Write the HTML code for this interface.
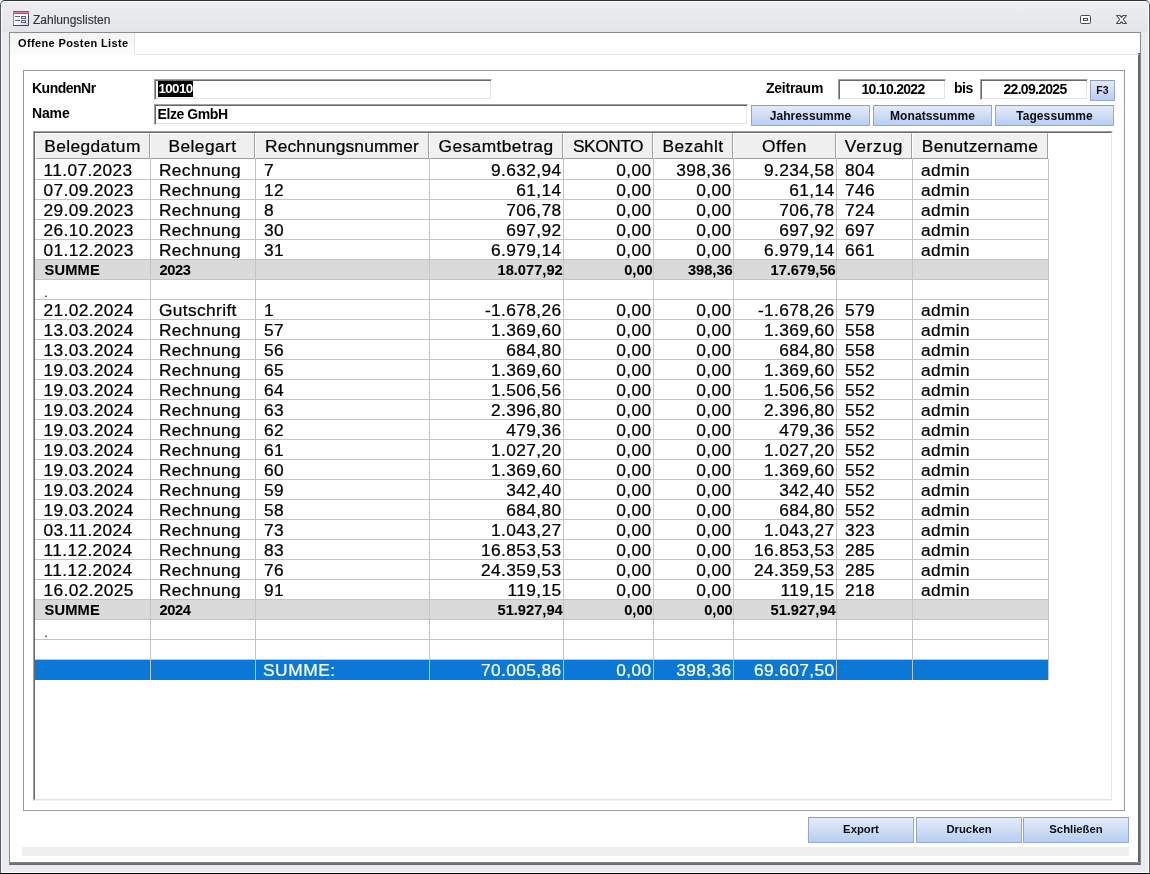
<!DOCTYPE html>
<html lang="de"><head><meta charset="utf-8"><title>Zahlungslisten</title>
<style>
html,body{margin:0;padding:0;}
body{will-change:transform;width:1150px;height:874px;overflow:hidden;background:#fff;position:relative;font-family:"Liberation Sans",sans-serif;color:#000;}
div{box-sizing:border-box;}
.abs{position:absolute;}
/* window */
#win{position:absolute;left:0;top:0;width:1150px;height:874px;border:1px solid #565a60;border-top-color:#2e3034;border-bottom-color:#000;border-radius:5px 5px 0 0;background:#e9ebef;overflow:hidden;}
#win .hl{position:absolute;left:0;top:0;width:1148px;height:872px;border:1px solid #fff;border-radius:4px 4px 0 0;}
#tbar{position:absolute;left:1px;top:1px;width:1146px;height:30px;background:linear-gradient(#edeef1,#e3e4e8);}
#title{position:absolute;left:33px;top:12px;font-size:12px;line-height:16px;color:#2f343e;white-space:nowrap;letter-spacing:0;-webkit-text-stroke:0.15px #2f343e;}
#content{position:absolute;left:9px;top:32px;width:1132px;height:833px;background:#fff;border:1px solid #88898e;border-top-color:#8c8c90;border-bottom-color:#6a6b6e;}
#shr{position:absolute;left:1138px;top:53px;width:2px;height:811px;background:#63666b;}
#shb{position:absolute;left:10px;top:862px;width:1130px;height:2px;background:linear-gradient(#8e8f92,#66676a);}
/* tab */
#tab{position:absolute;left:10px;top:33px;width:125px;height:21px;background:linear-gradient(#f4f4f4,#fbfbfb);border-right:1px solid #e4e4e4;}
#tabline{position:absolute;left:135px;top:54px;width:1004px;height:1px;background:#e2e2e2;}
#tabtxt{position:absolute;left:18px;top:36px;font-size:11px;font-weight:bold;line-height:14px;white-space:nowrap;letter-spacing:0.38px;}
/* group box */
#grp{position:absolute;left:23px;top:70px;width:1102px;height:741px;border:1px solid #9a9a9a;}
.lbl{position:absolute;font-size:14px;font-weight:bold;line-height:16px;white-space:nowrap;}
.inp{position:absolute;height:21px;background:#fff;border:1px solid;border-color:#a0a0a0 #fff #fff #a0a0a0;box-shadow:inset 1px 1px 0 #696969, inset -1px -1px 0 #e4e4e4;}
.inp span{position:absolute;top:1px;font-size:14px;font-weight:bold;line-height:16px;white-space:nowrap;}
.btn{position:absolute;border:1px solid;border-color:#8f9db8 #93a9d6 #93a9d6 #96a6c4;background:linear-gradient(#e2ebfb,#d1def6 45%,#b6cdf4);font-weight:bold;text-align:center;white-space:nowrap;color:#0a0a14;}
/* list */
#lb{position:absolute;left:33px;top:131px;width:1080px;height:670px;border:1px solid;border-color:#a0a0a0 #fff #f4f4f4 #a0a0a0;}
#lb2{position:absolute;left:0;top:0;width:1078px;height:668px;border:1px solid;border-color:#696969 #e6e6e6 #e3e3e3 #696969;}
.list{position:absolute;left:35px;top:133px;width:1076px;height:666px;overflow:hidden;}
.hrow{position:absolute;left:0;top:0;height:26px;width:1013px;}
.hc{position:absolute;top:0;height:26px;background:#f0f0f0;border-left:1px solid #fff;border-top:1px solid #fff;border-right:1px solid #a0a0a0;border-bottom:1px solid #a0a0a0;text-align:center;font-size:17.33px;line-height:25px;white-space:nowrap;overflow:hidden;letter-spacing:0.12px;}
.row{position:absolute;left:0;width:1014px;height:20px;border-bottom:1px solid #c4c4c4;}
.row .c{position:absolute;top:0;height:18px;overflow:hidden;font-size:17.33px;line-height:20px;white-space:nowrap;letter-spacing:0.36px;}
.c.l{padding-left:9px;text-align:left;}
.row .c.l:first-child{padding-left:8.5px;}
.c.r{padding-right:1.6px;text-align:right;}
.row.s{background:#dadada;}
.row.s .c{font-size:14.67px;font-weight:bold;letter-spacing:0;line-height:20px;}
.row.s .c.r{padding-right:0.3px;}
.row.s .c.l{padding-left:9.5px;letter-spacing:0.15px;}
.row.p .c{font-size:11px;line-height:26px;letter-spacing:0;}
.row.p .c.l:first-child{padding-left:9.5px;}
.row.s .c:nth-child(2){letter-spacing:-0.4px;}
.row.t{background:#0a78d7;color:#fff;border-bottom-color:transparent;}
.row.t .c.l{letter-spacing:0.55px;padding-left:8px;}
.vl{position:absolute;top:26px;width:1px;height:521px;background:#c4c4c4;}
.list{-webkit-text-stroke:0.24px currentColor;}
.row.s .c{-webkit-text-stroke:0.08px currentColor;}

</style></head>
<body>
<div id="win"><div class="hl"></div><div id="tbar"></div></div>
<svg class="abs" style="left:13px;top:11px" width="16" height="15" viewBox="0 0 16 15">
<defs><linearGradient id="ig" x1="0" y1="0" x2="1" y2="1"><stop offset="0" stop-color="#ffffff"/><stop offset="0.55" stop-color="#f4f4fc"/><stop offset="1" stop-color="#cfd1ee"/></linearGradient></defs>
<rect x="0" y="0" width="16" height="15" fill="#8d92a8"/>
<rect x="1" y="3" width="14" height="11" fill="url(#ig)"/>
<rect x="0" y="0" width="16" height="1" fill="#b9406a"/>
<rect x="0" y="1" width="16" height="1" fill="#de7d98"/>
<rect x="0" y="2" width="16" height="1" fill="#c24a70"/>
<rect x="0" y="14" width="16" height="1" fill="#3f4458"/>
<rect x="15" y="3" width="1" height="12" fill="#474c63"/>
<rect x="2" y="5" width="5" height="1" fill="#5d6380"/>
<rect x="2" y="9" width="5" height="1" fill="#5d6380"/>
<rect x="8.5" y="5.5" width="4" height="2" fill="#dfe2f4" stroke="#5d6380"/>
<rect x="8.5" y="9.5" width="4" height="2" fill="#dfe2f4" stroke="#5d6380"/>
</svg>
<div id="title">Zahlungslisten</div>
<svg class="abs" style="left:1080px;top:15px" width="11" height="9" viewBox="0 0 11 9">
<rect x="0.5" y="0.5" width="10" height="8" rx="1.2" fill="#fff" stroke="#474c56"/>
<rect x="3.5" y="3.5" width="4" height="2" fill="#fff" stroke="#474c56"/>
</svg>
<svg class="abs" style="left:1115px;top:14px" width="13" height="11" viewBox="-1 -1 13 11">
<path d="M0.6 0.5 L3.9 0.5 L5.5 2.3 L7.1 0.5 L10.4 0.5 L7.3 4.5 L10.4 8.5 L7.1 8.5 L5.5 6.7 L3.9 8.5 L0.6 8.5 L3.7 4.5 Z" fill="#fff" stroke="#484c56" stroke-width="1.15" stroke-linejoin="round"/>
</svg>
<div id="content"></div><div id="shr"></div><div id="shb"></div>
<div id="tab"></div><div id="tabline"></div>
<div id="tabtxt">Offene Posten Liste</div>
<div id="grp"></div>
<div class="lbl" style="left:32px;top:80px;letter-spacing:-0.5px">KundenNr</div>
<div class="lbl" style="left:32px;top:105px;letter-spacing:-0.15px">Name</div>
<div class="inp" style="left:154px;top:79px;width:338px"><span style="left:3px;top:1px;height:16px;background:#000;color:#fff;font-size:13.33px;letter-spacing:-0.6px;padding-left:0.5px">10010</span></div>
<div class="inp" style="left:154px;top:104px;width:594px"><span style="left:2.5px;letter-spacing:-0.42px">Elze GmbH</span></div>
<div class="lbl" style="left:766px;top:80px;letter-spacing:-0.25px">Zeitraum</div>
<div class="inp" style="left:838px;top:79px;width:108px"><span style="left:1px;width:106px;text-align:center;letter-spacing:-0.7px">10.10.2022</span></div>
<div class="lbl" style="left:954px;top:80px;letter-spacing:-0.45px">bis</div>
<div class="inp" style="left:980px;top:79px;width:108px"><span style="left:1px;width:106px;text-align:center;letter-spacing:-0.7px">22.09.2025</span></div>
<div class="btn" style="left:1090px;top:80px;width:25px;height:21px;font-size:10.5px;line-height:19px">F3</div>
<div class="btn" style="left:751px;top:105px;width:119px;height:21px;font-size:12px;line-height:20px;letter-spacing:0.08px">Jahressumme</div>
<div class="btn" style="left:873px;top:105px;width:119px;height:21px;font-size:12px;line-height:20px;letter-spacing:0.08px">Monatssumme</div>
<div class="btn" style="left:995px;top:105px;width:119px;height:21px;font-size:12px;line-height:20px;letter-spacing:0.08px">Tagessumme</div>
<div id="lb"><div id="lb2"></div></div>
<div class="list">
<div class="hrow"><div class="hc" style="left:0px;width:115px;letter-spacing:0.4px">Belegdatum</div><div class="hc" style="left:115px;width:105px;letter-spacing:0.41px">Belegart</div><div class="hc" style="left:220px;width:174px;letter-spacing:0.19px">Rechnungsnummer</div><div class="hc" style="left:394px;width:134px;letter-spacing:0.43px">Gesamtbetrag</div><div class="hc" style="left:528px;width:90px;letter-spacing:-0.48px">SKONTO</div><div class="hc" style="left:618px;width:80px;letter-spacing:0.45px">Bezahlt</div><div class="hc" style="left:698px;width:103px;letter-spacing:0.62px">Offen</div><div class="hc" style="left:801px;width:76px;letter-spacing:0.72px">Verzug</div><div class="hc" style="left:877px;width:136px;letter-spacing:0.3px">Benutzername</div></div>
<div class="row d" style="top:27px"><div class="c l" style="left:0px;width:115px">11.07.2023</div><div class="c l" style="left:115px;width:105px">Rechnung</div><div class="c l" style="left:220px;width:174px">7</div><div class="c r" style="left:394px;width:134px">9.632,94</div><div class="c r" style="left:528px;width:90px">0,00</div><div class="c r" style="left:618px;width:80px">398,36</div><div class="c r" style="left:698px;width:103px">9.234,58</div><div class="c l" style="left:801px;width:76px">804</div><div class="c l" style="left:877px;width:136px">admin</div></div>
<div class="row d" style="top:47px"><div class="c l" style="left:0px;width:115px">07.09.2023</div><div class="c l" style="left:115px;width:105px">Rechnung</div><div class="c l" style="left:220px;width:174px">12</div><div class="c r" style="left:394px;width:134px">61,14</div><div class="c r" style="left:528px;width:90px">0,00</div><div class="c r" style="left:618px;width:80px">0,00</div><div class="c r" style="left:698px;width:103px">61,14</div><div class="c l" style="left:801px;width:76px">746</div><div class="c l" style="left:877px;width:136px">admin</div></div>
<div class="row d" style="top:67px"><div class="c l" style="left:0px;width:115px">29.09.2023</div><div class="c l" style="left:115px;width:105px">Rechnung</div><div class="c l" style="left:220px;width:174px">8</div><div class="c r" style="left:394px;width:134px">706,78</div><div class="c r" style="left:528px;width:90px">0,00</div><div class="c r" style="left:618px;width:80px">0,00</div><div class="c r" style="left:698px;width:103px">706,78</div><div class="c l" style="left:801px;width:76px">724</div><div class="c l" style="left:877px;width:136px">admin</div></div>
<div class="row d" style="top:87px"><div class="c l" style="left:0px;width:115px">26.10.2023</div><div class="c l" style="left:115px;width:105px">Rechnung</div><div class="c l" style="left:220px;width:174px">30</div><div class="c r" style="left:394px;width:134px">697,92</div><div class="c r" style="left:528px;width:90px">0,00</div><div class="c r" style="left:618px;width:80px">0,00</div><div class="c r" style="left:698px;width:103px">697,92</div><div class="c l" style="left:801px;width:76px">697</div><div class="c l" style="left:877px;width:136px">admin</div></div>
<div class="row d" style="top:107px"><div class="c l" style="left:0px;width:115px">01.12.2023</div><div class="c l" style="left:115px;width:105px">Rechnung</div><div class="c l" style="left:220px;width:174px">31</div><div class="c r" style="left:394px;width:134px">6.979,14</div><div class="c r" style="left:528px;width:90px">0,00</div><div class="c r" style="left:618px;width:80px">0,00</div><div class="c r" style="left:698px;width:103px">6.979,14</div><div class="c l" style="left:801px;width:76px">661</div><div class="c l" style="left:877px;width:136px">admin</div></div>
<div class="row s" style="top:127px"><div class="c l" style="left:0px;width:115px">SUMME</div><div class="c l" style="left:115px;width:105px">2023</div><div class="c l" style="left:220px;width:174px"></div><div class="c r" style="left:394px;width:134px">18.077,92</div><div class="c r" style="left:528px;width:90px">0,00</div><div class="c r" style="left:618px;width:80px">398,36</div><div class="c r" style="left:698px;width:103px">17.679,56</div><div class="c l" style="left:801px;width:76px"></div><div class="c l" style="left:877px;width:136px"></div></div>
<div class="row p" style="top:147px"><div class="c l" style="left:0px;width:115px">.</div><div class="c l" style="left:115px;width:105px"></div><div class="c l" style="left:220px;width:174px"></div><div class="c r" style="left:394px;width:134px"></div><div class="c r" style="left:528px;width:90px"></div><div class="c r" style="left:618px;width:80px"></div><div class="c r" style="left:698px;width:103px"></div><div class="c l" style="left:801px;width:76px"></div><div class="c l" style="left:877px;width:136px"></div></div>
<div class="row d" style="top:167px"><div class="c l" style="left:0px;width:115px">21.02.2024</div><div class="c l" style="left:115px;width:105px">Gutschrift</div><div class="c l" style="left:220px;width:174px">1</div><div class="c r" style="left:394px;width:134px">-1.678,26</div><div class="c r" style="left:528px;width:90px">0,00</div><div class="c r" style="left:618px;width:80px">0,00</div><div class="c r" style="left:698px;width:103px">-1.678,26</div><div class="c l" style="left:801px;width:76px">579</div><div class="c l" style="left:877px;width:136px">admin</div></div>
<div class="row d" style="top:187px"><div class="c l" style="left:0px;width:115px">13.03.2024</div><div class="c l" style="left:115px;width:105px">Rechnung</div><div class="c l" style="left:220px;width:174px">57</div><div class="c r" style="left:394px;width:134px">1.369,60</div><div class="c r" style="left:528px;width:90px">0,00</div><div class="c r" style="left:618px;width:80px">0,00</div><div class="c r" style="left:698px;width:103px">1.369,60</div><div class="c l" style="left:801px;width:76px">558</div><div class="c l" style="left:877px;width:136px">admin</div></div>
<div class="row d" style="top:207px"><div class="c l" style="left:0px;width:115px">13.03.2024</div><div class="c l" style="left:115px;width:105px">Rechnung</div><div class="c l" style="left:220px;width:174px">56</div><div class="c r" style="left:394px;width:134px">684,80</div><div class="c r" style="left:528px;width:90px">0,00</div><div class="c r" style="left:618px;width:80px">0,00</div><div class="c r" style="left:698px;width:103px">684,80</div><div class="c l" style="left:801px;width:76px">558</div><div class="c l" style="left:877px;width:136px">admin</div></div>
<div class="row d" style="top:227px"><div class="c l" style="left:0px;width:115px">19.03.2024</div><div class="c l" style="left:115px;width:105px">Rechnung</div><div class="c l" style="left:220px;width:174px">65</div><div class="c r" style="left:394px;width:134px">1.369,60</div><div class="c r" style="left:528px;width:90px">0,00</div><div class="c r" style="left:618px;width:80px">0,00</div><div class="c r" style="left:698px;width:103px">1.369,60</div><div class="c l" style="left:801px;width:76px">552</div><div class="c l" style="left:877px;width:136px">admin</div></div>
<div class="row d" style="top:247px"><div class="c l" style="left:0px;width:115px">19.03.2024</div><div class="c l" style="left:115px;width:105px">Rechnung</div><div class="c l" style="left:220px;width:174px">64</div><div class="c r" style="left:394px;width:134px">1.506,56</div><div class="c r" style="left:528px;width:90px">0,00</div><div class="c r" style="left:618px;width:80px">0,00</div><div class="c r" style="left:698px;width:103px">1.506,56</div><div class="c l" style="left:801px;width:76px">552</div><div class="c l" style="left:877px;width:136px">admin</div></div>
<div class="row d" style="top:267px"><div class="c l" style="left:0px;width:115px">19.03.2024</div><div class="c l" style="left:115px;width:105px">Rechnung</div><div class="c l" style="left:220px;width:174px">63</div><div class="c r" style="left:394px;width:134px">2.396,80</div><div class="c r" style="left:528px;width:90px">0,00</div><div class="c r" style="left:618px;width:80px">0,00</div><div class="c r" style="left:698px;width:103px">2.396,80</div><div class="c l" style="left:801px;width:76px">552</div><div class="c l" style="left:877px;width:136px">admin</div></div>
<div class="row d" style="top:287px"><div class="c l" style="left:0px;width:115px">19.03.2024</div><div class="c l" style="left:115px;width:105px">Rechnung</div><div class="c l" style="left:220px;width:174px">62</div><div class="c r" style="left:394px;width:134px">479,36</div><div class="c r" style="left:528px;width:90px">0,00</div><div class="c r" style="left:618px;width:80px">0,00</div><div class="c r" style="left:698px;width:103px">479,36</div><div class="c l" style="left:801px;width:76px">552</div><div class="c l" style="left:877px;width:136px">admin</div></div>
<div class="row d" style="top:307px"><div class="c l" style="left:0px;width:115px">19.03.2024</div><div class="c l" style="left:115px;width:105px">Rechnung</div><div class="c l" style="left:220px;width:174px">61</div><div class="c r" style="left:394px;width:134px">1.027,20</div><div class="c r" style="left:528px;width:90px">0,00</div><div class="c r" style="left:618px;width:80px">0,00</div><div class="c r" style="left:698px;width:103px">1.027,20</div><div class="c l" style="left:801px;width:76px">552</div><div class="c l" style="left:877px;width:136px">admin</div></div>
<div class="row d" style="top:327px"><div class="c l" style="left:0px;width:115px">19.03.2024</div><div class="c l" style="left:115px;width:105px">Rechnung</div><div class="c l" style="left:220px;width:174px">60</div><div class="c r" style="left:394px;width:134px">1.369,60</div><div class="c r" style="left:528px;width:90px">0,00</div><div class="c r" style="left:618px;width:80px">0,00</div><div class="c r" style="left:698px;width:103px">1.369,60</div><div class="c l" style="left:801px;width:76px">552</div><div class="c l" style="left:877px;width:136px">admin</div></div>
<div class="row d" style="top:347px"><div class="c l" style="left:0px;width:115px">19.03.2024</div><div class="c l" style="left:115px;width:105px">Rechnung</div><div class="c l" style="left:220px;width:174px">59</div><div class="c r" style="left:394px;width:134px">342,40</div><div class="c r" style="left:528px;width:90px">0,00</div><div class="c r" style="left:618px;width:80px">0,00</div><div class="c r" style="left:698px;width:103px">342,40</div><div class="c l" style="left:801px;width:76px">552</div><div class="c l" style="left:877px;width:136px">admin</div></div>
<div class="row d" style="top:367px"><div class="c l" style="left:0px;width:115px">19.03.2024</div><div class="c l" style="left:115px;width:105px">Rechnung</div><div class="c l" style="left:220px;width:174px">58</div><div class="c r" style="left:394px;width:134px">684,80</div><div class="c r" style="left:528px;width:90px">0,00</div><div class="c r" style="left:618px;width:80px">0,00</div><div class="c r" style="left:698px;width:103px">684,80</div><div class="c l" style="left:801px;width:76px">552</div><div class="c l" style="left:877px;width:136px">admin</div></div>
<div class="row d" style="top:387px"><div class="c l" style="left:0px;width:115px">03.11.2024</div><div class="c l" style="left:115px;width:105px">Rechnung</div><div class="c l" style="left:220px;width:174px">73</div><div class="c r" style="left:394px;width:134px">1.043,27</div><div class="c r" style="left:528px;width:90px">0,00</div><div class="c r" style="left:618px;width:80px">0,00</div><div class="c r" style="left:698px;width:103px">1.043,27</div><div class="c l" style="left:801px;width:76px">323</div><div class="c l" style="left:877px;width:136px">admin</div></div>
<div class="row d" style="top:407px"><div class="c l" style="left:0px;width:115px">11.12.2024</div><div class="c l" style="left:115px;width:105px">Rechnung</div><div class="c l" style="left:220px;width:174px">83</div><div class="c r" style="left:394px;width:134px">16.853,53</div><div class="c r" style="left:528px;width:90px">0,00</div><div class="c r" style="left:618px;width:80px">0,00</div><div class="c r" style="left:698px;width:103px">16.853,53</div><div class="c l" style="left:801px;width:76px">285</div><div class="c l" style="left:877px;width:136px">admin</div></div>
<div class="row d" style="top:427px"><div class="c l" style="left:0px;width:115px">11.12.2024</div><div class="c l" style="left:115px;width:105px">Rechnung</div><div class="c l" style="left:220px;width:174px">76</div><div class="c r" style="left:394px;width:134px">24.359,53</div><div class="c r" style="left:528px;width:90px">0,00</div><div class="c r" style="left:618px;width:80px">0,00</div><div class="c r" style="left:698px;width:103px">24.359,53</div><div class="c l" style="left:801px;width:76px">285</div><div class="c l" style="left:877px;width:136px">admin</div></div>
<div class="row d" style="top:447px"><div class="c l" style="left:0px;width:115px">16.02.2025</div><div class="c l" style="left:115px;width:105px">Rechnung</div><div class="c l" style="left:220px;width:174px">91</div><div class="c r" style="left:394px;width:134px">119,15</div><div class="c r" style="left:528px;width:90px">0,00</div><div class="c r" style="left:618px;width:80px">0,00</div><div class="c r" style="left:698px;width:103px">119,15</div><div class="c l" style="left:801px;width:76px">218</div><div class="c l" style="left:877px;width:136px">admin</div></div>
<div class="row s" style="top:467px"><div class="c l" style="left:0px;width:115px">SUMME</div><div class="c l" style="left:115px;width:105px">2024</div><div class="c l" style="left:220px;width:174px"></div><div class="c r" style="left:394px;width:134px">51.927,94</div><div class="c r" style="left:528px;width:90px">0,00</div><div class="c r" style="left:618px;width:80px">0,00</div><div class="c r" style="left:698px;width:103px">51.927,94</div><div class="c l" style="left:801px;width:76px"></div><div class="c l" style="left:877px;width:136px"></div></div>
<div class="row p" style="top:487px"><div class="c l" style="left:0px;width:115px">.</div><div class="c l" style="left:115px;width:105px"></div><div class="c l" style="left:220px;width:174px"></div><div class="c r" style="left:394px;width:134px"></div><div class="c r" style="left:528px;width:90px"></div><div class="c r" style="left:618px;width:80px"></div><div class="c r" style="left:698px;width:103px"></div><div class="c l" style="left:801px;width:76px"></div><div class="c l" style="left:877px;width:136px"></div></div>
<div class="row d" style="top:507px"><div class="c l" style="left:0px;width:115px"></div><div class="c l" style="left:115px;width:105px"></div><div class="c l" style="left:220px;width:174px"></div><div class="c r" style="left:394px;width:134px"></div><div class="c r" style="left:528px;width:90px"></div><div class="c r" style="left:618px;width:80px"></div><div class="c r" style="left:698px;width:103px"></div><div class="c l" style="left:801px;width:76px"></div><div class="c l" style="left:877px;width:136px"></div></div>
<div class="row t" style="top:527px"><div class="c l" style="left:0px;width:115px"></div><div class="c l" style="left:115px;width:105px"></div><div class="c l" style="left:220px;width:174px">SUMME:</div><div class="c r" style="left:394px;width:134px">70.005,86</div><div class="c r" style="left:528px;width:90px">0,00</div><div class="c r" style="left:618px;width:80px">398,36</div><div class="c r" style="left:698px;width:103px">69.607,50</div><div class="c l" style="left:801px;width:76px"></div><div class="c l" style="left:877px;width:136px"></div></div>
<div class="vl" style="left:115px"></div><div class="vl" style="left:220px"></div><div class="vl" style="left:394px"></div><div class="vl" style="left:528px"></div><div class="vl" style="left:618px"></div><div class="vl" style="left:698px"></div><div class="vl" style="left:801px"></div><div class="vl" style="left:877px"></div><div class="vl" style="left:1013px"></div>
</div>
<div class="btn" style="left:808px;top:817px;width:106px;height:26px;font-size:11.3px;line-height:23px">Export</div>
<div class="btn" style="left:916px;top:817px;width:106px;height:26px;font-size:11.3px;line-height:23px">Drucken</div>
<div class="btn" style="left:1023px;top:817px;width:106px;height:26px;font-size:11.3px;line-height:23px">Schließen</div>
<div class="abs" style="left:22px;top:847px;width:1107px;height:9px;background:#efefef"></div>
</body></html>
